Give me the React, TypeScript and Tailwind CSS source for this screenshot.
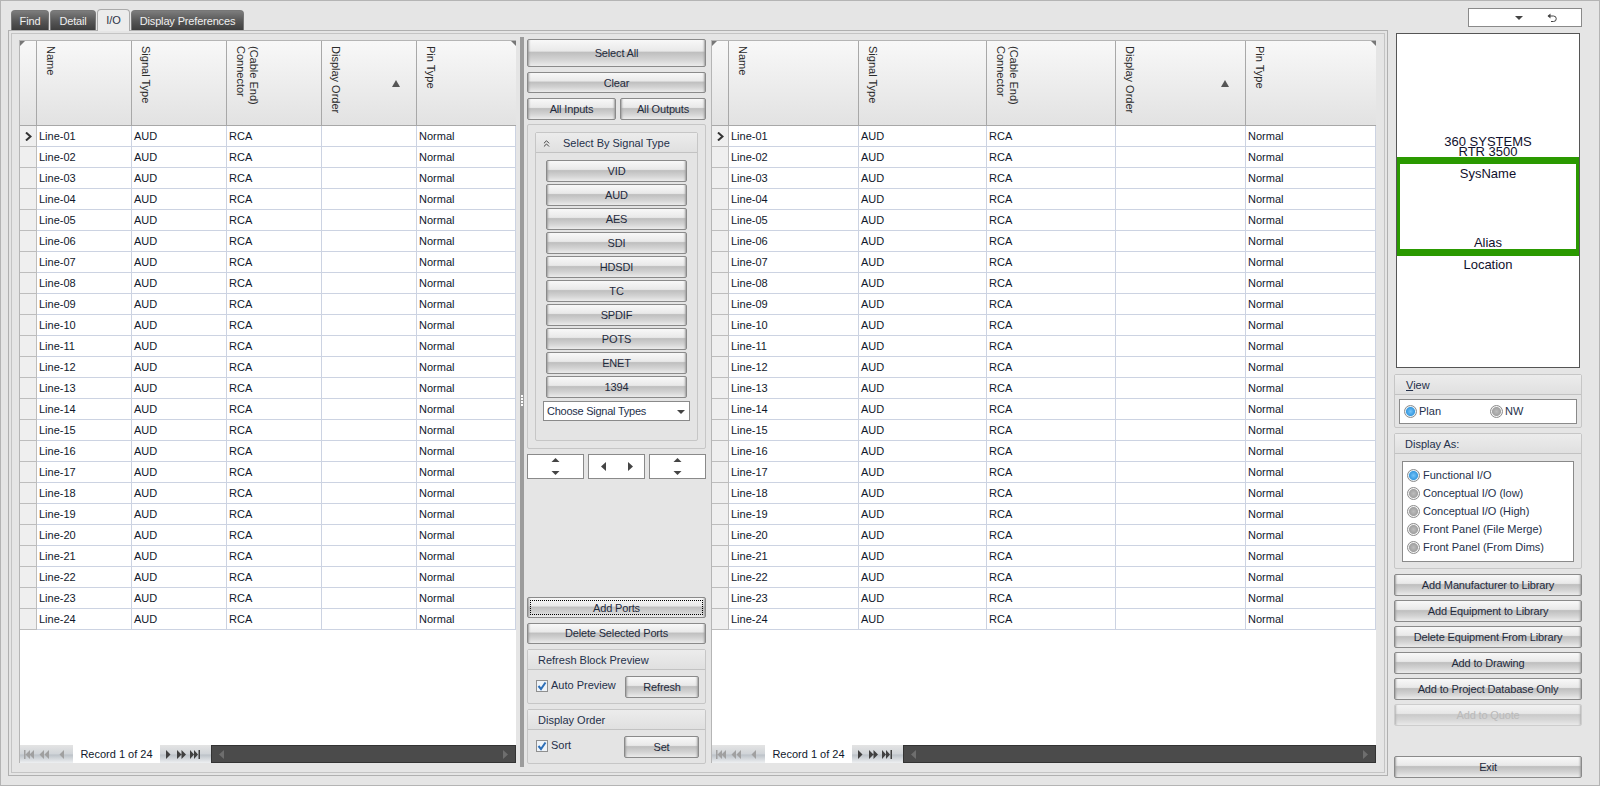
import { ChevronsUp } from 'lucide-react'

const rows = Array.from({ length: 24 }, (_, i) => `Line-${String(i + 1).padStart(2, '0')}`)
const signalTypes = ['VID', 'AUD', 'AES', 'SDI', 'HDSDI', 'TC', 'SPDIF', 'POTS', 'ENET', '1394']
const displayAs = [
  'Functional I/O',
  'Conceptual I/O (low)',
  'Conceptual I/O (High)',
  'Front Panel (File Merge)',
  'Front Panel (From Dims)',
]
const libraryButtons = [
  'Add Manufacturer to Library',
  'Add Equipment to Library',
  'Delete Equipment From Library',
  'Add to Drawing',
  'Add to Project Database Only',
]

const btnBg =
  'bg-[linear-gradient(to_bottom,#f8f8f8_0%,#e9e9e9_42%,#bfbfbf_48%,#d2d2d2_74%,#ebebeb_100%)] shadow-[inset_3px_0_2px_-2px_#a0a0a0,inset_-3px_0_2px_-2px_#a0a0a0]'
const navBg = 'bg-[linear-gradient(to_bottom,#e4e4e4,#d0d4d8_50%,#bcc2c8_55%,#eef0f2)]'

function Btn({ label, className, focus, disabled }: { label: string; className: string; focus?: boolean; disabled?: boolean }) {
  return (
    <div
      className={`absolute flex items-center justify-center rounded-[2px] border tracking-[-0.15px] ${btnBg} ${
        disabled ? 'border-[#c4c4c4] text-[#a8a8a8] opacity-70' : 'border-[#8a8a8a] text-[#1f2a3c]'
      } ${focus ? 'border-[#6f93b5]' : ''} ${className}`}
    >
      {focus ? <div className="absolute inset-[2px] border border-dotted border-black" /> : null}
      <span className="relative">{label}</span>
    </div>
  )
}

function Group({ title, className }: { title: React.ReactNode; className: string }) {
  return (
    <div className={`absolute rounded-[2px] border border-[#c6c6c6] bg-[#e4e4e4] ${className}`}>
      <div className="flex h-[20px] items-center border-b border-[#c2c2c2] bg-[linear-gradient(to_bottom,#ececec,#e0e0e0)] pt-[1px] text-[#24304a]">
        {title}
      </div>
    </div>
  )
}

function Radio({ on }: { on?: boolean }) {
  return (
    <span
      className={`block h-[13px] w-[13px] shrink-0 rounded-full border border-[#8c8c8c] ${
        on
          ? 'bg-[radial-gradient(circle,#74c4fa_0%,#3a9be0_52%,#e4f0f8_64%,#dcdcdc_100%)]'
          : 'bg-[radial-gradient(circle,#bcbcbc_0%,#a2a2a2_52%,#f4f4f4_64%,#e0e0e0_100%)]'
      }`}
    />
  )
}

function Check({ className }: { className: string }) {
  return (
    <span className={`absolute block h-[12px] w-[12px] border border-[#8f8f8f] bg-[#eef3f8] ${className}`}>
      <svg viewBox="0 0 10 10" className="h-full w-full">
        <path d="M1.500 5 L4 8 L8.500 1.500" fill="none" stroke="#2d6fb8" strokeWidth="2" />
      </svg>
    </span>
  )
}

function NavIcon({ d }: { d: string }) {
  return (
    <svg width="10" height="9" viewBox="0 0 10 9" className="shrink-0">
      <path d={d} fill="currentColor" />
    </svg>
  )
}

function Corner({ side }: { side: 'left' | 'right' }) {
  return (
    <svg width="5" height="5" viewBox="0 0 5 5" className={`absolute top-0 ${side === 'left' ? 'left-0' : 'right-0'}`}>
      <path d={side === 'left' ? 'M0 0h5L0 5z' : 'M0 0h5v5z'} fill="#777" />
    </svg>
  )
}

function Grid({ left, cols, width }: { left: number; cols: string; width: number }) {
  return (
    <div className="absolute top-[40px] h-[723px] border-t border-l border-[#b5b5b5] bg-white" style={{ left, width }}>
      <div className="relative grid h-[85px] border-b border-[#a8a8a8] bg-[linear-gradient(to_bottom,#f8f8f8,#e2e2e2)] text-[#2a2a2a]" style={{ gridTemplateColumns: cols }}>
        <Corner side="left" />
        <Corner side="right" />
        <div className="border-r border-[#a8a8a8]" />
        <Head>Name</Head>
        <Head>Signal Type</Head>
        <Head>
          (Cable End)
          <br />
          Connector
        </Head>
        <Head>
          Display Order
          <svg width="8" height="7" viewBox="0 0 8 7" className="absolute top-[39px] right-[16px]">
            <path d="M4 0l4 7H0z" fill="#555" />
          </svg>
        </Head>
        <Head last>Pin Type</Head>
      </div>
      {rows.map((name, i) => (
        <div key={name} className="grid h-[21px] text-[#10182c]" style={{ gridTemplateColumns: cols }}>
          <div className="flex items-center justify-center border-r border-b border-[#bdbdbd] bg-[#efefef]">
            {i === 0 ? (
              <svg width="7" height="9" viewBox="0 0 7 9">
                <path d="M1 0.500 L5.500 4.500 L1 8.500" fill="none" stroke="#333" strokeWidth="2" />
              </svg>
            ) : null}
          </div>
          <Cell>{name}</Cell>
          <Cell>AUD</Cell>
          <Cell>RCA</Cell>
          <Cell />
          <Cell>Normal</Cell>
        </div>
      ))}
      <div className="absolute right-0 bottom-0 left-0 flex h-[18px] items-stretch bg-white">
        <div className={`flex w-[53px] items-center gap-[5px] pl-[4px] text-[#a0a0a0] ${navBg}`}>
          <NavIcon d="M0 0h1.500v9H0z M6 0v9L1.500 4.500z M10 0v9L5.500 4.500z" />
          <NavIcon d="M5 0v9L0.500 4.500z M10 0v9L5.500 4.500z" />
          <span className="ml-[3px]">
            <NavIcon d="M7 0v9L2.500 4.500z" />
          </span>
        </div>
        <div className="flex w-[87px] items-center justify-center text-[#10182c]">Record 1 of 24</div>
        <div className={`flex w-[51px] items-center gap-[3px] pl-[4px] text-[#404040] ${navBg}`}>
          <NavIcon d="M2 0v9L6.500 4.500z" />
          <NavIcon d="M0 0v9L4.500 4.500z M4.500 0v9L9 4.500z" />
          <NavIcon d="M0 0v9L4 4.500z M4 0v9L8 4.500z M8.500 0H10v9H8.500z" />
        </div>
        <div className="absolute top-0 right-0 bottom-0 left-[191px] flex items-center justify-between border border-[#333] bg-[#4b4b4b] px-[5px] text-[#6e6e6e]">
          <NavIcon d="M7 0v9L2 4.500z" />
          <NavIcon d="M3 0v9L8 4.500z" />
        </div>
      </div>
    </div>
  )
}

function Head({ children, last }: { children: React.ReactNode; last?: boolean }) {
  return (
    <div className={`relative pt-[5px] pl-[7px] ${last ? '' : 'border-r border-[#a8a8a8]'}`}>
      <div className="[writing-mode:vertical-rl] leading-[13px]">{children}</div>
    </div>
  )
}

function Cell({ children }: { children?: React.ReactNode }) {
  return <div className="flex items-center overflow-hidden border-r border-b border-[#ccd3e2] pl-[2px] whitespace-nowrap">{children}</div>
}

function Spinner({ className, horizontal }: { className: string; horizontal?: boolean }) {
  return (
    <div className={`absolute top-[454px] flex h-[25px] w-[57px] items-center justify-center border border-[#8a8a8a] bg-white ${className}`}>
      {horizontal ? (
        <svg width="32" height="9" viewBox="0 0 32 9">
          <path d="M5 0v9L0 4.500z M27 0v9l5-4.500z" fill="#444" />
        </svg>
      ) : (
        <svg width="9" height="17" viewBox="0 0 9 17">
          <path d="M4.500 0l4 4h-8z M4.500 17l4-4h-8z" fill="#444" />
        </svg>
      )}
    </div>
  )
}

const darkTab =
  'absolute top-[10px] flex h-[20px] items-center justify-center rounded-t-[4px] border border-b-0 border-[#777] bg-[linear-gradient(to_bottom,#7c7c7c,#555_55%,#3e3e3e)] pt-[1px] tracking-[-0.15px] text-[#f0f0f0]'

export default function App() {
  return (
    <div className="relative h-[786px] w-[1600px] overflow-hidden border border-[#b4b4b4] bg-[#e5e5e5] text-[11px] leading-none">
      <div className="absolute top-[-1px] left-[-1px] h-[786px] w-[1600px] [font-family:Liberation_Sans,Arial,sans-serif]">
        {/* tabs */}
        <div className={`${darkTab} left-[11px] w-[38px]`}>Find</div>
        <div className={`${darkTab} left-[50px] w-[46px]`}>Detail</div>
        <div className="absolute top-[9px] left-[97px] z-10 flex h-[22px] w-[33px] items-center justify-center rounded-t-[4px] border border-b-0 border-[#aaa] bg-[#ececec] text-[#2a3246]">I/O</div>
        <div className={`${darkTab} left-[131px] w-[113px]`}>Display Preferences</div>

        {/* tab panel */}
        <div className="absolute top-[30px] left-[8px] h-[746px] w-[1380px] border border-[#b0b0b0] p-[2px]">
          <div className="h-full w-full border border-[#c4c4c4]" />
        </div>

        <Grid left={19} width={497} cols="17px 95px 95px 95px 95px 1fr" />
        <Grid left={711} width={665} cols="17px 130px 128px 129px 130px 1fr" />

        {/* splitter */}
        <div className="absolute top-[37px] left-[520px] h-[730px] w-[4px] bg-[#9c9c9c]" />
        <div className="absolute top-[395px] left-[521px] flex flex-col gap-[1px]">
          {[0, 1, 2, 3].map((d) => (
            <span key={d} className="block h-[2px] w-[2px] bg-white" />
          ))}
        </div>

        {/* center column */}
        <Btn label="Select All" className="top-[39px] left-[527px] h-[28px] w-[179px] pt-[1px]" />
        <Btn label="Clear" className="top-[72px] left-[527px] h-[21px] w-[179px] pt-[1px]" />
        <Btn label="All Inputs" className="top-[98px] left-[527px] h-[22px] w-[89px]" />
        <Btn label="All Outputs" className="top-[98px] left-[620px] h-[22px] w-[86px]" />

        <div className="absolute top-[124px] left-[527px] h-[325px] w-[179px] rounded-[2px] border border-[#c6c6c6]" />
        <Group
          className="top-[132px] left-[535px] h-[309px] w-[163px]"
          title={
            <>
              <ChevronsUp size={11} className="mr-[11px] ml-[5px] text-[#333]" strokeWidth={2} />
              <span className="pt-[1px]">Select By Signal Type</span>
            </>
          }
        />
        <div className="absolute top-[160px] left-[546px] w-[141px]">
          {signalTypes.map((s) => (
            <div key={s} className="relative h-[24px]">
              <Btn label={s} className="top-0 left-0 h-[22px] w-[141px]" />
            </div>
          ))}
        </div>
        <div className="absolute top-[401px] left-[543px] flex h-[20px] w-[147px] items-center justify-between border border-[#8a8a8a] bg-white pt-[1px] pr-[4px] pl-[3px] tracking-[-0.25px] text-[#24304a]">
          Choose Signal Types
          <span className="h-0 w-0 border-x-[4px] border-t-[4px] border-x-transparent border-t-[#444]" />
        </div>

        <Spinner className="left-[527px]" />
        <Spinner className="left-[588px]" horizontal />
        <Spinner className="left-[649px]" />

        <Btn label="Add Ports" focus className="top-[597px] left-[527px] h-[21px] w-[179px] pt-[1px]" />
        <Btn label="Delete Selected Ports" className="top-[623px] left-[527px] h-[21px] w-[179px]" />

        <Group className="top-[649px] left-[527px] h-[55px] w-[179px]" title={<span className="pl-[10px]">Refresh Block Preview</span>} />
        <Check className="top-[680px] left-[536px]" />
        <span className="absolute top-[680px] left-[551px] text-[#24304a]">Auto Preview</span>
        <Btn label="Refresh" className="top-[676px] left-[625px] h-[22px] w-[74px] pt-[1px]" />

        <Group className="top-[709px] left-[527px] h-[55px] w-[179px]" title={<span className="pl-[10px]">Display Order</span>} />
        <Check className="top-[740px] left-[536px]" />
        <span className="absolute top-[740px] left-[551px] text-[#24304a]">Sort</span>
        <Btn label="Set" className="top-[736px] left-[624px] h-[22px] w-[75px]" />

        {/* top right selector */}
        <div className="absolute top-[8px] left-[1468px] flex h-[19px] w-[114px] items-center border border-[#8a8a8a] bg-white pl-[46px]">
          <span className="h-0 w-0 border-x-[4px] border-t-[4px] border-x-transparent border-t-[#444]" />
          <svg width="10" height="10" viewBox="0 0 10 10" className="ml-[24px]">
            <path d="M1 3h5.500a2.500 2.500 0 0 1 0 5.500H4" fill="none" stroke="#444" strokeWidth="1" />
            <path d="M3.500 0.500v5L0.500 3z" fill="#444" />
          </svg>
        </div>

        {/* block preview */}
        <div className="absolute top-[33px] left-[1396px] h-[335px] w-[184px] border border-[#555] bg-white text-[13px] text-[#10102c]">
          <div className="absolute top-[102px] w-full text-center leading-[11px]">360 SYSTEMS</div>
          <div className="absolute top-[112px] w-full text-center leading-[11px]">RTR 3500</div>
          <div className="absolute top-[123px] right-0 left-0 h-[99px] border-x-[3px] border-y-[7px] border-[#2a9900]" />
          <div className="absolute top-[133px] w-full text-center leading-[14px]">SysName</div>
          <div className="absolute top-[202px] w-full text-center leading-[14px]">Alias</div>
          <div className="absolute top-[224px] w-full text-center leading-[14px]">Location</div>
        </div>

        {/* view */}
        <Group className="top-[374px] left-[1394px] h-[54px] w-[188px]" title={<span className="pl-[11px]"><span className="underline">V</span>iew</span>} />
        <div className="absolute top-[399px] left-[1399px] flex h-[25px] w-[178px] items-center border border-[#8a8a8a] bg-white pl-[4px] text-[#24304a]">
          <Radio on />
          <span className="ml-[2px] w-[71px]">Plan</span>
          <Radio />
          <span className="ml-[2px]">NW</span>
        </div>

        {/* display as */}
        <Group className="top-[433px] left-[1394px] h-[136px] w-[188px]" title={<span className="pl-[10px]">Display As:</span>} />
        <div className="absolute top-[461px] left-[1402px] flex h-[101px] w-[172px] flex-col justify-center border border-[#8a8a8a] bg-white pl-[4px] text-[#24304a]">
          {displayAs.map((d, i) => (
            <div key={d} className="flex h-[18px] items-center gap-[3px]">
              <Radio on={i === 0} />
              {d}
            </div>
          ))}
        </div>

        {libraryButtons.map((b, i) => {
          const tops = ['top-[574px]', 'top-[600px]', 'top-[626px]', 'top-[652px]', 'top-[678px]']
          return <Btn key={b} label={b} className={`left-[1394px] h-[22px] w-[188px] ${tops[i]}`} />
        })}
        <Btn label="Add to Quote" disabled className="top-[704px] left-[1394px] h-[22px] w-[188px]" />
        <Btn label="Exit" className="top-[756px] left-[1394px] h-[22px] w-[188px]" />
      </div>
    </div>
  )
}
